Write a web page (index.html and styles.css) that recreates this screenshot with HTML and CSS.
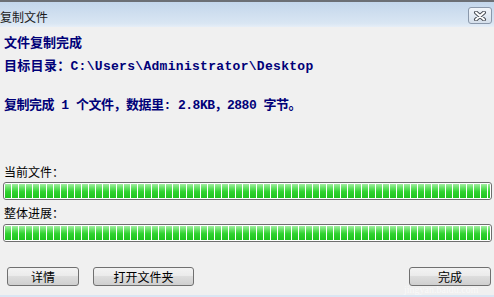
FILE: index.html
```html
<!DOCTYPE html>
<html lang="zh-CN">
<head>
    <meta charset="UTF-8">
    <title>复制文件</title>
    <link rel="stylesheet" href="styles.css">
</head>
<body>
    <div class="window">
        <div class="titlebar">
            <span class="title">复制文件</span>
            <div class="close">
                <svg width="14" height="10" viewBox="0 0 14 10">
                    <path d="M3 1.5 L11 8.5 M11 1.5 L3 8.5" stroke="#4a4f57" stroke-width="4" stroke-linecap="round"/>
                    <path d="M3 1.5 L11 8.5 M11 1.5 L3 8.5" stroke="#fff" stroke-width="2" stroke-linecap="round"/>
                </svg>
            </div>
        </div>

        <div class="content">
            <div class="info head">文件复制完成</div>
            <div class="info target">目标目录：C:\Users\Administrator\Desktop</div>
            <div class="info summary">复制完成 1 个文件，数据里: 2.8KB，2880 字节。</div>

            <div class="label first">当前文件：</div>
            <div class="bar"><div class="fill" style="width: 100%;"></div></div>

            <div class="label">整体进展：</div>
            <div class="bar second"><div class="fill" style="width: 100%;"></div></div>

            <div class="buttons">
                <button class="btn details">详情</button>
                <button class="btn open">打开文件夹</button>
                <button class="btn done">完成</button>
            </div>
        </div>

        <div class="watermark">jingyan.baidu.com</div>
    </div>
</body>
</html>
```

FILE: styles.css
```css
body {
    margin: 0;
    background: #f0f0f0;
    font-family: "Noto Sans CJK SC", sans-serif;
}

.window {
    position: relative;
    width: 494px;
    height: 297px;
    box-sizing: border-box;
    background: #f0f0f0;
    border-bottom: 2px solid #dae6f3;
    overflow: hidden;
}

/* title bar */
.titlebar {
    height: 27px;
    box-sizing: border-box;
    border-top: 2px solid #6b6f75;
    background: linear-gradient(to bottom, #c3d6eb, #d9e6f3 85%, #e6eef7);
    display: flex;
    align-items: flex-start;
}

.title {
    margin-top: 8px;
    font-size: 12px;
    line-height: 14px;
    color: #1b1b1b;
}

.close {
    margin-left: auto;
    margin-right: 2px;
    margin-top: 5px;
    width: 24px;
    height: 17px;
    box-sizing: border-box;
    border: 1px solid #8a98ab;
    border-radius: 3px;
    background: linear-gradient(to bottom, #f1f5fa, #d5e0ec);
    display: flex;
    align-items: center;
    justify-content: center;
}

/* body */
.content {
    padding: 0 2px 0 3px;
}

.info {
    margin-left: 1px;
    font-family: "Liberation Mono", "Noto Sans CJK SC", monospace;
    font-weight: bold;
    font-size: 13px;
    line-height: 16px;
    color: #000078;
    white-space: nowrap;
}

.head {
    margin-top: 9px;
}

.target {
    margin-top: 7px;
    letter-spacing: 0.3px;
}

.summary {
    margin-top: 23px;
    letter-spacing: -0.5px;
}

.label {
    margin-left: 1px;
    margin-top: 6px;
    font-size: 12px;
    line-height: 14px;
    color: #000;
}

.label.first {
    margin-top: 51px;
}

.bar {
    margin-top: 3px;
    height: 18px;
    box-sizing: border-box;
    border: 1px solid #6e6e6e;
    border-radius: 3px;
    padding: 1px;
    background: #fff;
}

.bar.second {
    margin-top: 4px;
}

.fill {
    height: 100%;
    background:
        repeating-linear-gradient(to right, transparent 0 6px, #fff 6px 7px),
        linear-gradient(to bottom, #a3eea3 0%, #5fe05f 30%, #2fd22f 55%, #1fc41f 100%);
}

.buttons {
    display: flex;
    margin-top: 25px;
    padding: 0 1px 0 4px;
}

.btn {
    height: 19px;
    box-sizing: border-box;
    border: 1px solid #707070;
    border-radius: 3px;
    background: linear-gradient(to bottom, #f3f3f3, #ebebeb 45%, #dddddd 50%, #cfcfcf);
    font-family: "Noto Sans CJK SC", sans-serif;
    font-size: 12px;
    line-height: 15px;
    color: #000;
    padding: 0;
}

.details {
    width: 72px;
}

.open {
    width: 101px;
    margin-left: 14px;
}

.done {
    width: 82px;
    margin-left: auto;
}

.watermark {
    position: absolute;
    left: 404px;
    top: 284px;
    font-family: "Liberation Serif", serif;
    font-size: 10px;
    line-height: 11px;
    color: rgba(255, 255, 255, 0.6);
    pointer-events: none;
}
```
